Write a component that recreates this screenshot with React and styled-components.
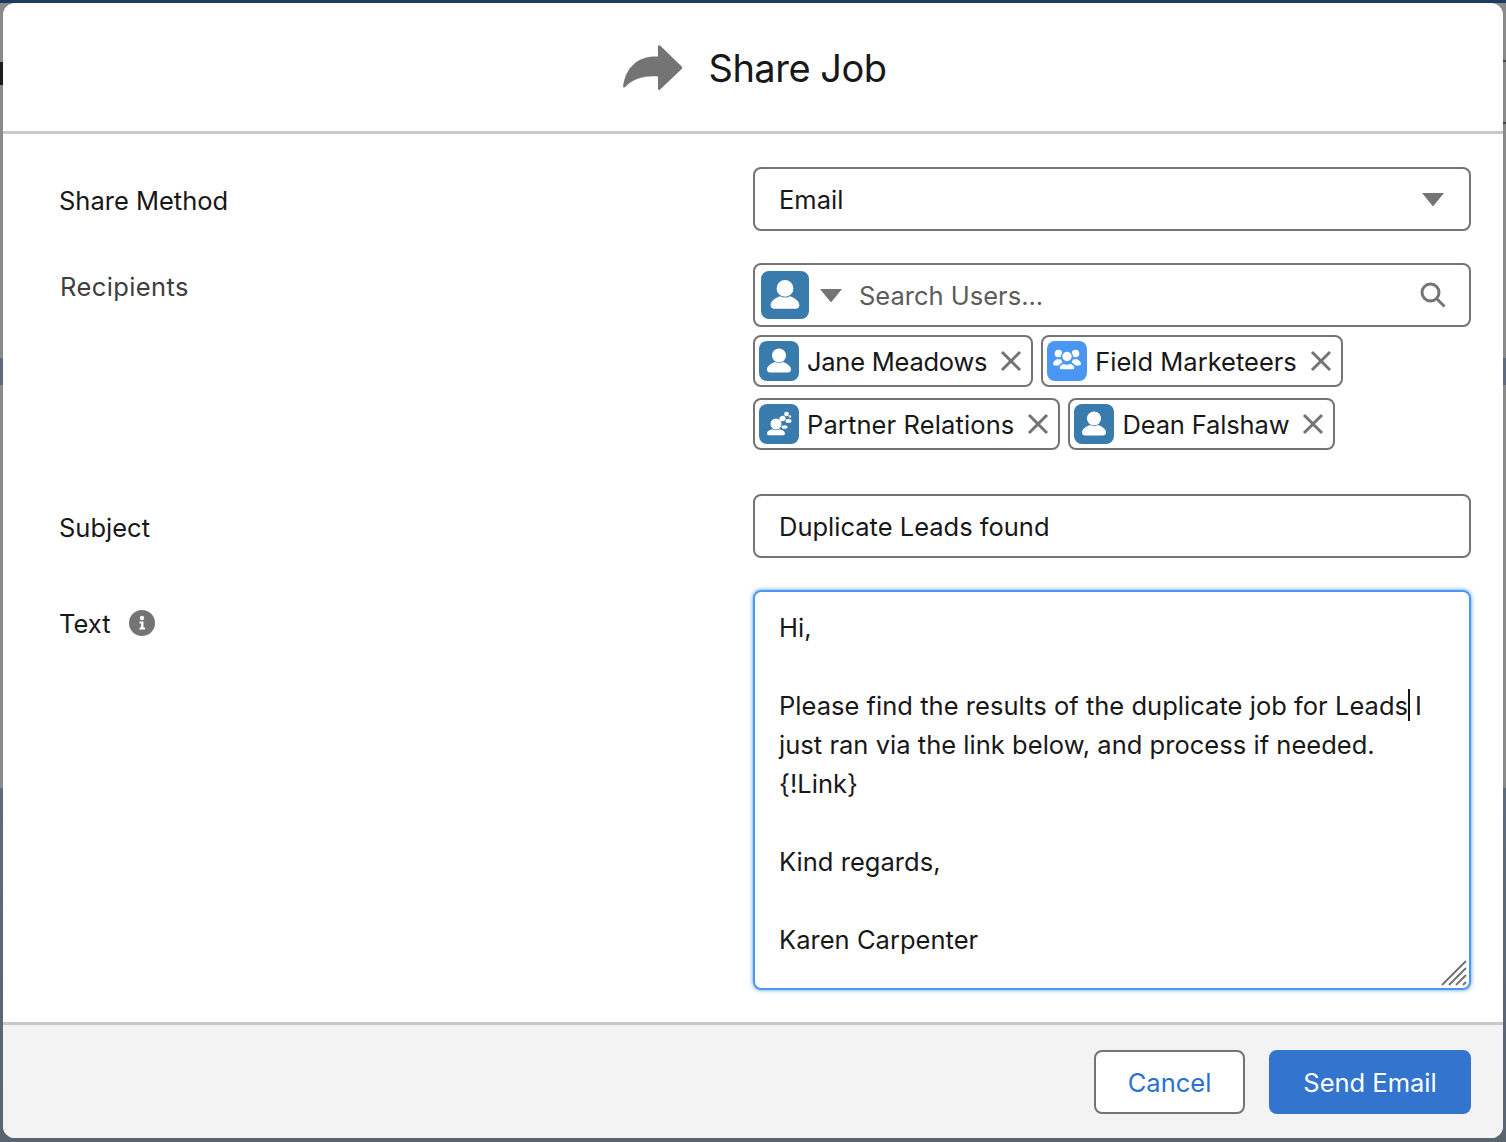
import * as React from "react"
import styled, { createGlobalStyle } from "styled-components"

const GlobalStyle = createGlobalStyle`
  html, body {
    margin: 0;
    padding: 0;
  }
  body {
    width: 1506px;
    height: 1142px;
    overflow: hidden;
    font-family: Inter, "Noto Sans", "Liberation Sans", sans-serif;
    color: #181818;
    background:
      linear-gradient(#1c1c1c, #1c1c1c) 0 62px / 3px 23px no-repeat,
      linear-gradient(#444, #444) 1503px 60px / 3px 2px no-repeat,
      linear-gradient(#444, #444) 1503px 122px / 3px 2px no-repeat,
      linear-gradient(
        #1e3a5f 0,
        #1e3a5f 3px,
        #8a8a8a 3px,
        #8a8a8a 358px,
        #5f6b7d 358px,
        #5f6b7d 385px,
        #8a8a8a 385px,
        #8a8a8a 788px,
        #5f6b7d 788px,
        #5a6370 1142px
      );
  }
`

const Backdrop = styled.div`
  box-sizing: border-box;
  width: 1506px;
  height: 1142px;
  padding: 3px 3px 4px;
`

const Modal = styled.div`
  display: flex;
  flex-direction: column;
  height: 100%;
  background: #fff;
  border-radius: 12px;
  overflow: hidden;
`

const Header = styled.header`
  box-sizing: border-box;
  display: flex;
  align-items: center;
  justify-content: center;
  gap: 26px;
  height: 131px;
  flex: none;
  padding: 1px 0 0 3px;
  border-bottom: 3px solid #c9c9c9;
`

const Title = styled.h1`
  margin: 0;
  font-size: 38px;
  font-weight: 400;
  letter-spacing: -0.5px;
  line-height: 48px;
`

const Body = styled.div`
  flex: 1;
  display: flex;
  flex-direction: column;
  gap: 32px;
  padding: 33px 32px 32px 56px;
`

const Row = styled.div`
  display: grid;
  grid-template-columns: 694px 718px;
`

const Label = styled.div`
  box-sizing: border-box;
  display: flex;
  align-items: center;
  gap: 20px;
  height: ${(props) => props.$height || 64}px;
  padding-top: 2px;
  font-size: 25.5px;
  color: ${(props) => (props.$muted ? "#3e3e3e" : "inherit")};
  letter-spacing: ${(props) => (props.$muted ? 0.4 : 0)}px;
  margin-left: ${(props) => (props.$muted ? 1 : 0)}px;
`

const Field = styled.div`
  box-sizing: border-box;
  display: flex;
  align-items: center;
  height: 64px;
  padding: 0 24px;
  background: #fff;
  border: 2px solid #747474;
  border-radius: 8px;
  font-size: 25.5px;
`

const SelectField = styled(Field)`
  justify-content: space-between;
  padding-right: 25px;
`

const SearchField = styled(Field)`
  padding: 0 22px 0 6px;
`

const SearchText = styled.span`
  flex: 1;
  margin-left: 17px;
  color: #5c5c5c;
`

const Caret = styled.svg`
  flex: none;
  width: 22px;
  height: 13px;
  fill: #747474;
  margin-left: ${(props) => props.$offset || 0}px;
`

const Pills = styled.div`
  display: flex;
  flex-wrap: wrap;
  gap: 11px 8px;
  margin: 8px 0 12px;
`

const Pill = styled.div`
  box-sizing: border-box;
  display: flex;
  align-items: center;
  height: 52px;
  padding: 0 9px 0 4px;
  background: #fff;
  border: 2px solid #747474;
  border-radius: 8px;
  font-size: 25.5px;
`

const PillName = styled.span`
  margin: 0 13px 0 8px;
  white-space: nowrap;
  letter-spacing: ${(props) => props.$tracking || 0}px;
`

const IconTile = styled.span`
  flex: none;
  display: flex;
  align-items: center;
  justify-content: center;
  width: ${(props) => props.$size}px;
  height: ${(props) => props.$size}px;
  border-radius: 8px;
  background: ${(props) => props.$color || "#3a7bad"};
  svg {
    width: 100%;
    height: 100%;
    fill: #fff;
  }
`

const CloseIcon = styled.svg`
  flex: none;
  width: 22px;
  height: 22px;
  stroke: #747474;
  stroke-width: 3;
  fill: none;
`

const TextBox = styled.div`
  box-sizing: border-box;
  position: relative;
  height: 400px;
  padding: 16px 24px;
  border: 2px solid #4a97f3;
  border-radius: 8px;
  box-shadow: 0 0 4px #4a97f3;
  font-size: 25.5px;
  letter-spacing: 0.03px;
  line-height: 39px;
`

const TextLine = styled.div`
  min-height: 39px;
  white-space: nowrap;
`

const TextCursor = styled.span`
  display: inline-block;
  width: 2px;
  height: 32px;
  margin: 0 5px 0 0;
  vertical-align: -6px;
  background: #181818;
`

const ResizeHandle = styled.svg`
  position: absolute;
  right: 1px;
  bottom: 1px;
  width: 28px;
  height: 28px;
  stroke: #747474;
  stroke-width: 2;
`

const InfoIcon = styled.svg`
  flex: none;
  width: 26px;
  height: 26px;
  margin-left: -2px;
`

const Footer = styled.footer`
  flex: none;
  display: flex;
  justify-content: flex-end;
  gap: 24px;
  height: 116px;
  padding: 25px 32px 0 0;
  box-sizing: border-box;
  background: #f3f3f3;
  border-top: 3px solid #c9c9c9;
`

const Button = styled.button`
  box-sizing: border-box;
  width: ${(props) => props.$width}px;
  height: 64px;
  padding: 0;
  font-family: inherit;
  font-size: 25.5px;
  border-radius: 8px;
  border: 2px solid ${(props) => (props.$primary ? "#3374cf" : "#747474")};
  background: ${(props) => (props.$primary ? "#3374cf" : "#fff")};
  color: ${(props) => (props.$primary ? "#fff" : "#2a71cf")};
`

const ShareArrow = () => (
  <svg width="60" height="46" viewBox="0 0 60 46" fill="#747474">
    <path d="M35 1.5c0-1.2 1.2-1.7 2.1-.9l21.6 20.9c.7.7.7 1.7 0 2.4L37.1 44.6c-.9.8-2.1.3-2.1-.9V31.5c-13.5-1-24.5 2-32.8 10.5-.9.9-2.3.4-2.1-.8C3 21 16 10.5 35 11.5z" />
  </svg>
)

const UserIcon = () => (
  <svg viewBox="0 0 40 40">
    <circle cx="20" cy="14.5" r="7" />
    <path d="M8 28.5c0-4 5-6.5 8-7.5 2.5 1.5 5.5 1.5 8 0 3 1 8 3.5 8 7.5 0 1.7-1.3 3-3 3H11c-1.7 0-3-1.300-3-3z" />
  </svg>
)

const GroupIcon = () => (
  <svg viewBox="0 0 40 40">
    <circle cx="11.5" cy="12.5" r="3.8" />
    <path d="M6 23c0-2.600 2.500-4.200 4.500-5 1 .6 2.400.6 3.400.2l1.600 3.300c-1.500.8-2.800 1.700-3.300 3H8c-1.200 0-2-.8-2-1.500z" />
    <circle cx="28.5" cy="12.5" r="3.8" />
    <path d="M34 23c0-2.600-2.500-4.200-4.500-5-1 .6-2.400.6-3.400.2l-1.600 3.300c1.500.8 2.800 1.700 3.300 3H32c1.200 0 2-.8 2-1.500z" />
    <g stroke="#4a97f3" strokeWidth="1.4">
      <circle cx="20" cy="15.5" r="5.4" />
      <path d="M12 27c0-2.800 2.800-4.300 4.800-5 1.800 1.200 4.600 1.200 6.400 0 2 .7 4.800 2.200 4.800 5 0 1.200-1 2-2 2H14c-1 0-2-.8-2-2z" />
    </g>
  </svg>
)

const PartnerIcon = () => (
  <svg viewBox="0 0 40 40">
    <circle cx="17" cy="20" r="5.5" />
    <path d="M8 29.5c0-2.400 2.800-3.600 5.500-4.300 2.100 1.300 5 1.300 7 0 2.700.7 5.500 1.900 5.500 4.300 0 1-.8 1.700-1.700 1.700H9.700C8.800 31.200 8 30.500 8 29.500z" />
    <ellipse cx="23.5" cy="14.5" rx="3.2" ry="2.6" transform="rotate(-20 23.5 14.5)" />
    <ellipse cx="27.5" cy="10" rx="2.4" ry="2.2" />
    <ellipse cx="29.5" cy="17" rx="3" ry="1.9" />
    <ellipse cx="25.5" cy="23" rx="3" ry="1.8" />
    <circle cx="31" cy="12.5" r="1.2" />
  </svg>
)

const Close = () => (
  <CloseIcon viewBox="0 0 22 22">
    <path d="M2 2l18 18M20 2L2 20" />
  </CloseIcon>
)

const recipients = [
  { name: "Jane Meadows", icon: <UserIcon />, tracking: -0.25 },
  { name: "Field Marketeers", icon: <GroupIcon />, color: "#4a97f3" },
  { name: "Partner Relations", icon: <PartnerIcon />, tracking: 0.12 },
  { name: "Dean Falshaw", icon: <UserIcon />, tracking: -0.15 },
]

export default function App() {
  return (
    <Backdrop>
      <GlobalStyle />
      <Modal>
        <Header>
          <ShareArrow />
          <Title>Share Job</Title>
        </Header>
        <Body>
          <Row>
            <Label>Share Method</Label>
            <SelectField>
              Email
              <Caret viewBox="0 0 22 13">
                <path d="M0 0h22L11.8 12.6a1 1 0 0 1-1.6 0z" />
              </Caret>
            </SelectField>
          </Row>
          <Row>
            <Label $height={44} $muted>
              Recipients
            </Label>
            <div>
              <SearchField>
                <IconTile $size={48}>
                  <UserIcon />
                </IconTile>
                <Caret viewBox="0 0 22 13" $offset={11}>
                  <path d="M0 0h22L11.8 12.6a1 1 0 0 1-1.6 0z" />
                </Caret>
                <SearchText>Search Users...</SearchText>
                <svg width="28" height="28" viewBox="0 0 28 28" fill="none" stroke="#747474" strokeWidth="3">
                  <circle cx="11.5" cy="11.5" r="8.5" />
                  <path d="M17.5 17.5l8 8" />
                </svg>
              </SearchField>
              <Pills>
                {recipients.map((r) => (
                  <Pill key={r.name}>
                    <IconTile $size={40} $color={r.color}>
                      {r.icon}
                    </IconTile>
                    <PillName $tracking={r.tracking}>{r.name}</PillName>
                    <Close />
                  </Pill>
                ))}
              </Pills>
            </div>
          </Row>
          <Row>
            <Label>Subject</Label>
            <Field>Duplicate Leads found</Field>
          </Row>
          <Row>
            <Label>
              Text
              <InfoIcon viewBox="0 0 26 26">
                <circle cx="13" cy="13" r="13" fill="#747474" />
                <circle cx="13" cy="8" r="2.2" fill="#fff" />
                <path d="M10.5 11.5H14.5V17.5H16V19.5H10.5V17.5H12V13.5H10.5z" fill="#fff" />
              </InfoIcon>
            </Label>
            <TextBox>
              <TextLine>Hi,</TextLine>
              <TextLine />
              <TextLine>
                Please find the results of the duplicate job for Leads
                <TextCursor />I
              </TextLine>
              <TextLine>just ran via the link below, and process if needed.</TextLine>
              <TextLine>{"{!Link}"}</TextLine>
              <TextLine />
              <TextLine>Kind regards,</TextLine>
              <TextLine />
              <TextLine>Karen Carpenter</TextLine>
              <ResizeHandle viewBox="0 0 28 28">
                <path d="M2 26L26 2M9 26L26 9M16 26L26 16M23 26l3-3" />
              </ResizeHandle>
            </TextBox>
          </Row>
        </Body>
        <Footer>
          <Button $width={151}>Cancel</Button>
          <Button $width={202} $primary>
            Send Email
          </Button>
        </Footer>
      </Modal>
    </Backdrop>
  )
}
